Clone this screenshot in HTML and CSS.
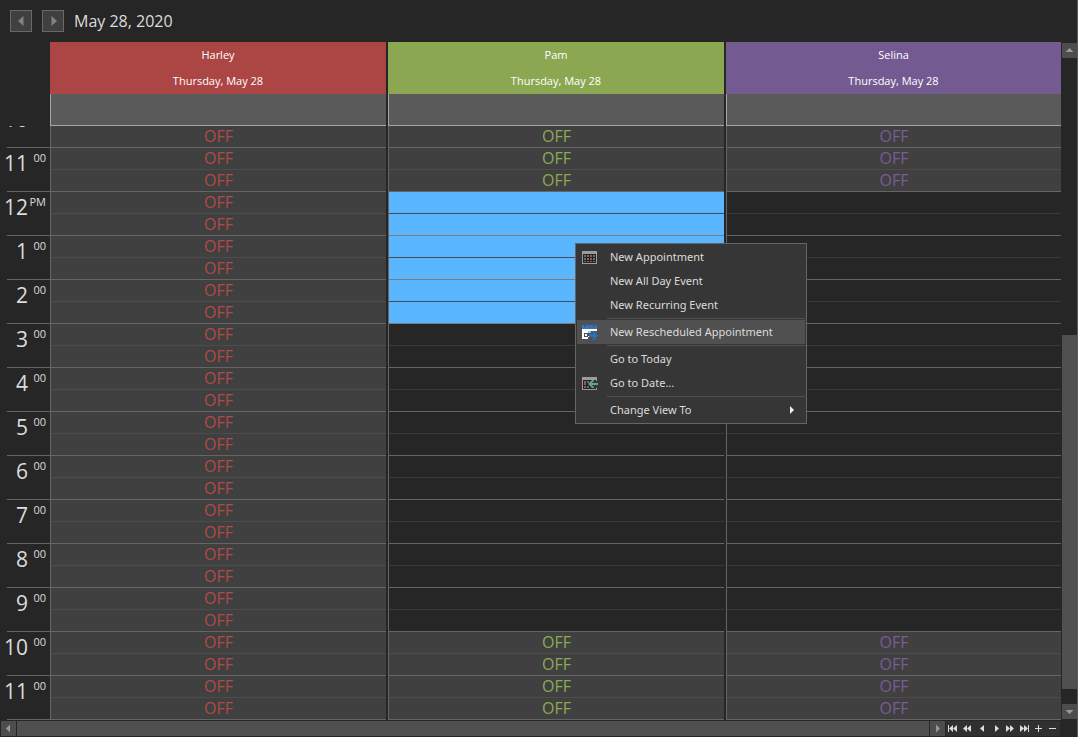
FILE: index.html
```html
<!DOCTYPE html>
<html lang="en">
<head>
<meta charset="utf-8">
<title>Schedule</title>
<link rel="stylesheet" href="styles.css">
</head>
<body>
<div class="scheduler">
  <header class="toolbar">
    <button class="nav-button" type="button" aria-label="Previous day"><svg width="20" height="20" viewBox="0 0 20 20"><path d="M12.500 5v10l-5.500-5z"/></svg></button>
    <button class="nav-button" type="button" aria-label="Next day"><svg width="20" height="20" viewBox="0 0 20 20"><path d="M8.500 5v10l5.500-5z"/></svg></button>
    <h1 class="date">May 28, 2020</h1>
  </header>

  <main class="view">
    <div class="ruler" id="ruler"></div>
    <div class="resources">
      <section class="resource resource-red">
        <h2 class="resource-head"><span>Harley</span><span>Thursday, May 28</span></h2>
        <div class="all-day"></div>
        <div class="slots" data-off="27" data-selected="0" data-free="0"></div>
      </section>
      <section class="resource resource-green">
        <h2 class="resource-head"><span>Pam</span><span>Thursday, May 28</span></h2>
        <div class="all-day"></div>
        <div class="slots" data-off="3" data-selected="6" data-free="14"></div>
      </section>
      <section class="resource resource-purple">
        <h2 class="resource-head"><span>Selina</span><span>Thursday, May 28</span></h2>
        <div class="all-day"></div>
        <div class="slots" data-off="3" data-selected="0" data-free="20"></div>
      </section>
    </div>
    <div class="vscroll">
      <button class="scroll-button" type="button" aria-label="Scroll up"><svg width="15" height="15" viewBox="0 0 15 15"><path d="M3.500 9h8l-4-4z"/></svg></button>
      <div class="vtrack"><div class="before"></div><div class="thumb"></div><div class="after"></div></div>
      <button class="scroll-button" type="button" aria-label="Scroll down"><svg width="15" height="15" viewBox="0 0 15 15"><path d="M3.500 6h8l-4 4z"/></svg></button>
    </div>
  </main>

  <footer class="bottom">
    <button class="scroll-button" type="button" aria-label="Scroll left"><svg width="15" height="15" viewBox="0 0 15 15"><path d="M9 3.500v8l-4-4z"/></svg></button>
    <div class="hthumb"></div>
    <button class="scroll-button" type="button" aria-label="Scroll right"><svg width="15" height="15" viewBox="0 0 15 15"><path d="M6 3.500v8l4-4z"/></svg></button>
    <nav class="pager">
      <button type="button" aria-label="First resource"><svg width="14" height="15" viewBox="0 0 14 15"><path d="M2 4h1v7H2zM7 4v7L3 7.500zM11 4v7L7 7.500z"/></svg></button>
      <button type="button" aria-label="Previous page"><svg width="14" height="15" viewBox="0 0 14 15"><path d="M7 4v7L3 7.500zM11 4v7L7 7.500z"/></svg></button>
      <button type="button" aria-label="Previous resource"><svg width="14" height="15" viewBox="0 0 14 15"><path d="M10 4v7L6 7.500z"/></svg></button>
      <button type="button" aria-label="Next resource"><svg width="14" height="15" viewBox="0 0 14 15"><path d="M7 4v7l4-3.500z"/></svg></button>
      <button type="button" aria-label="Next page"><svg width="14" height="15" viewBox="0 0 14 15"><path d="M4 4v7l4-3.500zM8 4v7l4-3.500z"/></svg></button>
      <button type="button" aria-label="Last resource"><svg width="14" height="15" viewBox="0 0 14 15"><path d="M4 4v7l4-3.500zM8 4v7l4-3.500zM12 4h1v7h-1z"/></svg></button>
      <button type="button" aria-label="Show more resources"><svg width="14" height="15" viewBox="0 0 14 15"><path d="M5 7h7v1H5zM8 4h1v7H8z"/></svg></button>
      <button type="button" aria-label="Show fewer resources"><svg width="14" height="15" viewBox="0 0 14 15"><path d="M5 7h7v1H5z"/></svg></button>
    </nav>
  </footer>
</div>

<div class="menu" role="menu">
  <button class="item" type="button" role="menuitem">
    <svg width="16" height="16" viewBox="0 0 16 16"><path fill="#262626" d="M1 3h13v11H1z"/><path fill="#9b9b9b" d="M0 2h15v13H0zM1 5v9h13V5z" fill-rule="evenodd"/><path fill="#6b6b6b" d="M2 6h2v2H2zM5 6h2v2H5zM8 6h2v2H8zM11 6h2v2h-2zM2 9h2v2H2zM5 9h2v2H5zM11 9h2v2h-2zM2 12h2v1H2zM5 12h2v1H5zM8 12h2v1H8zM11 12h2v1h-2z"/><path fill="#d04525" d="M8 9h2v2H8z"/></svg>
    <span>New Appointment</span></button>
  <button class="item" type="button" role="menuitem"><i></i><span>New All Day Event</span></button>
  <button class="item" type="button" role="menuitem"><i></i><span>New Recurring Event</span></button>
  <hr>
  <button class="item active" type="button" role="menuitem">
    <svg width="16" height="16" viewBox="0 0 16 16"><path fill="#3c73b4" d="M0 1h15v4H0z"/><path fill="#2d5c94" d="M2 0h2v3H2zM7 0h1v3H7zM11 0h2v3h-2z"/><path fill="#fff" d="M0 5h15v10H0z"/><path fill="#505050" d="M2 9h4v4H2z"/><path fill="#fff" d="M3 10h2v2H3z"/><path fill="#8dc5ed" d="M6 7h3v3H6z"/><path fill="#505050" d="M9 7h6V6h1v10H6v-3h3v-1H6V9h3z"/><path fill="#2c70b8" d="M7 10h5L9.500 7H12l4 4.500-4 4.500H9.500l2.500-3H7z"/></svg>
    <span>New Rescheduled Appointment</span></button>
  <hr>
  <button class="item" type="button" role="menuitem"><i></i><span>Go to Today</span></button>
  <button class="item" type="button" role="menuitem">
    <svg width="16" height="16" viewBox="0 0 16 16"><path fill="#262626" d="M1 3h13v11H1z"/><path fill="#9b9b9b" d="M0 2h15v13H0zM1 5v9h13V5z" fill-rule="evenodd"/><path fill="#6b6b6b" d="M2 6h2v2H2zM5 6h2v2H5zM2 11h2v2H2zM5 11h2v2H5z"/><path fill="#d04525" d="M2 8h2v2H2z"/><path fill="#363636" d="M10 6h6v7h-6z"/><path fill="#5fa38a" d="M6 9l4-4h2.500L10 8h6v2h-6l2.500 3H10z"/></svg>
    <span>Go to Date...</span></button>
  <hr>
  <button class="item" type="button" role="menuitem" aria-haspopup="true"><i></i><span>Change View To</span><svg class="arrow" width="8" height="8" viewBox="0 0 8 8"><path fill="#f0f0f0" d="M2 0v8l4-4z"/></svg></button>
</div>
<script src="script.js"></script>
</body>
</html>
```
FILE: script.js
```javascript
const SLOT_COUNT = 27;

const hours = [["10", "00"], ["11", "00"], ["12", "PM"]];
for (let h = 1; h <= 11; h += 1) hours.push([String(h), "00"]);

document.getElementById("ruler").innerHTML = hours
  .map(([hour, suffix]) => `<div class="hour"><span class="hour-number">${hour}</span><span class="hour-suffix">${suffix}</span></div>`)
  .join("");

document.querySelectorAll(".slots").forEach((column) => {
  const off = Number(column.dataset.off);
  const selected = Number(column.dataset.selected);
  const free = Number(column.dataset.free);
  for (let i = 0; i < SLOT_COUNT; i += 1) {
    const slot = document.createElement("div");
    let kind = "off";
    if (i >= off && i < off + selected) kind = "selected";
    else if (i >= off + selected && i < off + selected + free) kind = "free";
    slot.className = `slot ${kind}`;
    if (kind === "off") slot.textContent = "OFF";
    column.append(slot);
  }
});
```
FILE: styles.css
```css
* { box-sizing: border-box; }

body {
  margin: 0;
  background: #262626;
  color: #dcdcdc;
  font: 11px/16px "Open Sans", "Noto Sans", sans-serif;
}

button {
  margin: 0;
  padding: 0;
  border: 0;
  background: none;
  color: inherit;
  font: inherit;
}

svg { display: block; flex: none; }

.scheduler {
  display: flex;
  flex-direction: column;
  height: 100vh;
  overflow: hidden;
  border-right: 1px solid #595959;
}

.toolbar {
  display: flex;
  align-items: center;
  flex: none;
  height: 42px;
  padding-left: 10px;
}

.nav-button {
  width: 22px;
  height: 22px;
  margin-right: 10px;
  border: 1px solid #696969;
  background: #404040;
}
.nav-button svg { fill: #828282; }

.date {
  margin: 0;
  font-size: 16px;
  font-weight: 400;
  line-height: 22px;
}

.view {
  display: flex;
  flex: 1;
  min-height: 0;
}

.ruler {
  width: 50px;
  flex: none;
  margin-top: 84px;
  overflow: hidden;
}

.hour {
  display: flex;
  justify-content: flex-end;
  height: 44px;
  padding-right: 4px;
  background: linear-gradient(#656565, #656565) right bottom / 43px 1px no-repeat;
}
.hour:first-child { margin-top: -22px; }
.hour-number {
  font-size: 21px;
  line-height: 30px;
}
.hour-suffix {
  width: 18px;
  font-size: 11px;
  line-height: 20px;
  text-align: right;
}

.resources {
  display: grid;
  grid-template-columns: repeat(3, 1fr);
  gap: 2px;
  flex: 1;
}

.resource-head {
  display: flex;
  flex-direction: column;
  height: 52px;
  margin: 0;
  background: var(--head);
  color: #fff;
  font-size: 11px;
  font-weight: 400;
  line-height: 26px;
  text-align: center;
}
.resource-red { --head: #ab4644; --text: #b04b49; }
.resource-green { --head: #8ba751; --text: #8aab52; }
.resource-purple { --head: #735a91; --text: #775c98; margin-right: 1px; }

.all-day {
  height: 32px;
  border-left: 1px solid #a5a5a5;
  border-bottom: 1px solid #a5a5a5;
  background: #5a5a5a;
}

.slots { border-left: 1px solid #656565; }
.slot {
  height: 22px;
  border-bottom: 1px solid #4c4c4c;
  color: var(--text);
  font-size: 16px;
  line-height: 20px;
  text-align: center;
}
.off { background: #404040; }
.free { border-color: #3a3a3a; }
.slot:nth-child(odd) { border-color: #656565; }
.selected { border-color: #444d55; background: #5ab7ff; }
.selected:nth-child(odd) { border-color: #7a7a7a; }

.vscroll {
  display: flex;
  flex-direction: column;
  width: 15px;
  flex: none;
  padding: 1px 0;
}
.scroll-button {
  width: 15px;
  height: 15px;
  flex: none;
  background: #4d4d4d;
}
.scroll-button svg { fill: #999; }
.vtrack {
  display: flex;
  flex-direction: column;
  flex: 1;
}
.before { flex: 277; }
.thumb { flex: 354; background: #505050; }
.after { flex: 15; }

.bottom {
  display: flex;
  gap: 1px;
  flex: none;
  height: 17px;
  padding: 1px 17px 1px 1px;
}
.hthumb { flex: 1; background: #505050; }
.pager {
  display: flex;
  width: 114px;
  background: #303030;
}
.pager svg { fill: #dcdcdc; }

.menu {
  position: absolute;
  top: 243px;
  left: 575px;
  width: 232px;
  padding: 1px;
  border: 1px solid #656565;
  background: #363636;
}
.item {
  display: flex;
  align-items: center;
  gap: 12px;
  width: 100%;
  height: 24px;
  padding: 0 9px 0 5px;
  font-family: "Noto Sans", "Open Sans", sans-serif;
  text-align: left;
}
.item i { width: 16px; }
.item.active { background: #505050; }
.item .arrow { margin-left: auto; }
.menu hr {
  height: 3px;
  margin: 0 0 0 30px;
  border: solid #363636;
  border-width: 1px 0;
  background: #505050;
}
```
